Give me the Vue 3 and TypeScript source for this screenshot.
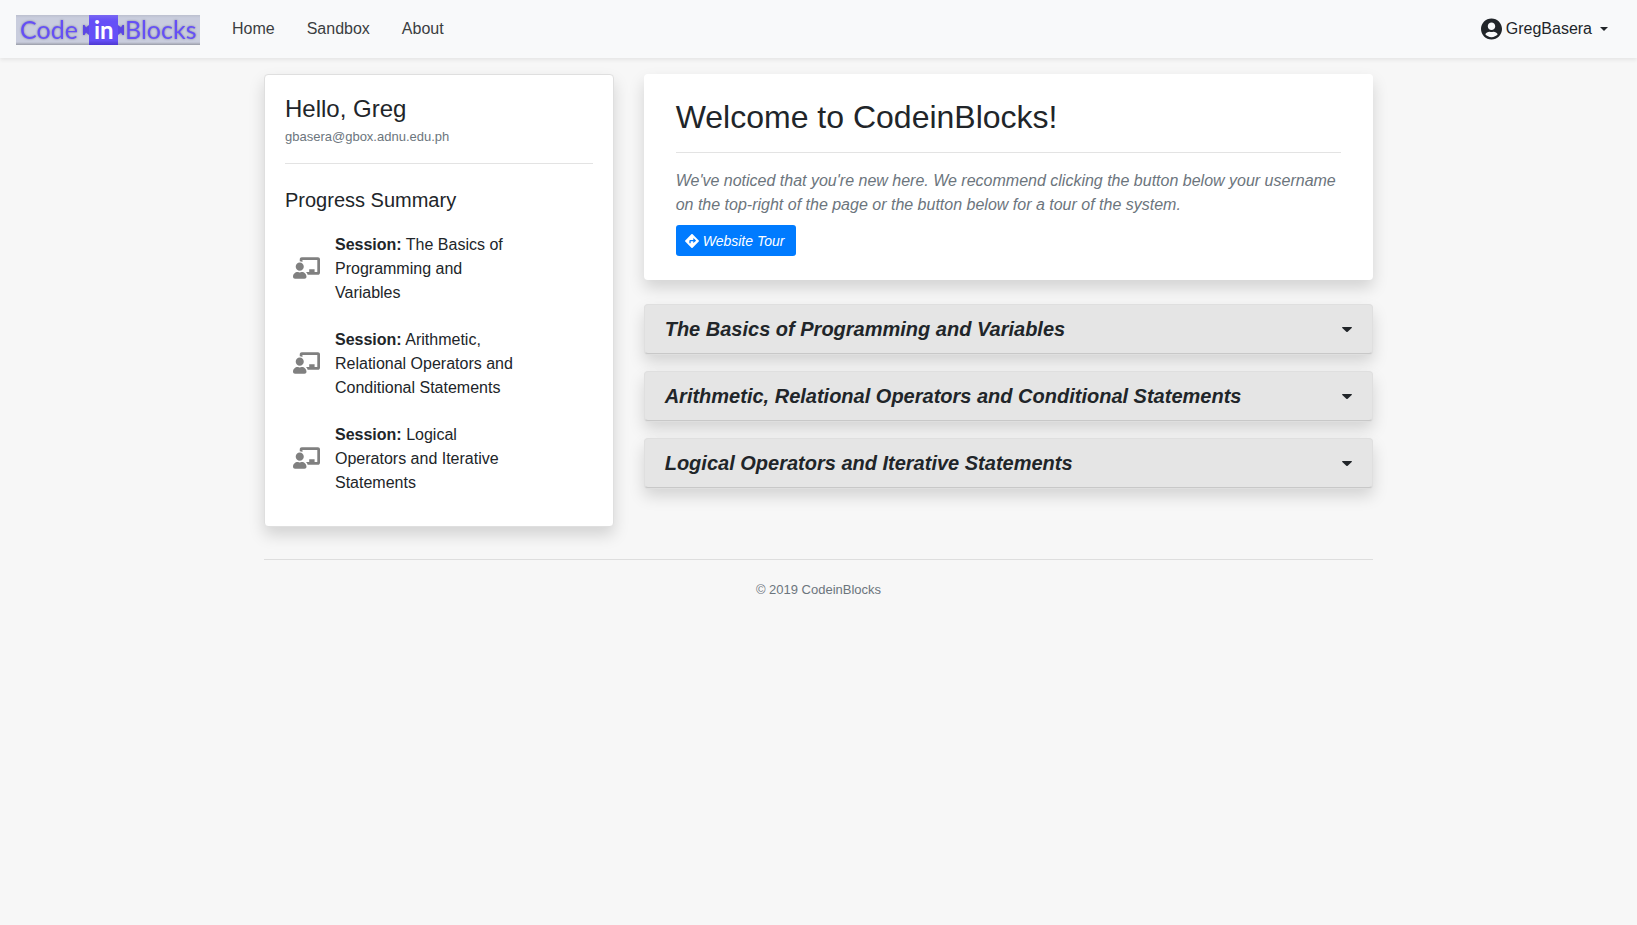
<script setup lang="ts">
import { ref } from 'vue'

interface Session {
  id: number
  title: string
}

const sessions: Session[] = [
  { id: 1, title: 'The Basics of Programming and Variables' },
  { id: 2, title: 'Arithmetic, Relational Operators and Conditional Statements' },
  { id: 3, title: 'Logical Operators and Iterative Statements' },
]

const links = ['Home', 'Sandbox', 'About']
const selected = ref<number | null>(null)

function select(id: number) {
  selected.value = selected.value === id ? null : id
}
</script>

<template>
  <header class="navbar">
    <a class="brand" href="#" aria-label="Code in Blocks">
      <svg class="logo" viewBox="0 0 184 30" aria-hidden="true">
        <defs>
          <linearGradient id="plate" x1="0" y1="0" x2="0" y2="1">
            <stop offset="0" stop-color="#bcc0cf" />
            <stop offset=".1" stop-color="#c9cddd" />
            <stop offset=".9" stop-color="#c9cddd" />
            <stop offset="1" stop-color="#9a9da8" />
          </linearGradient>
          <linearGradient id="block" x1="0" y1="0" x2="0" y2="1">
            <stop offset="0" stop-color="#7a68f2" />
            <stop offset=".2" stop-color="#654ff7" />
            <stop offset=".85" stop-color="#654ff7" />
            <stop offset="1" stop-color="#4d38d0" />
          </linearGradient>
          <filter id="glow" x="-10%" y="-20%" width="120%" height="140%">
            <feDropShadow dx="0" dy="0" stdDeviation="1.2" flood-color="#62657a" flood-opacity=".7" />
          </filter>
        </defs>
        <rect width="184" height="30" fill="url(#plate)" />
        <g filter="url(#glow)">
          <text class="logo-word" x="4" y="24">Code</text>
          <text class="logo-word" x="109" y="24">Blocks</text>
          <path d="M73 10L70 12.500L68.500 10H67V20H68.500L70 17.500L73 20zM102 10L105 12.500L106.500 10H108V20H106.500L105 17.500L102 20z" fill="#5b46e4" />
        </g>
        <rect x="73" width="29" height="30" fill="url(#block)" />
        <text class="logo-in" x="78" y="24">in</text>
      </svg>
    </a>
    <nav class="links" aria-label="Main">
      <a v-for="link in links" :key="link" href="#">{{ link }}</a>
    </nav>
    <button class="account" type="button" aria-haspopup="menu">
      <svg class="account-icon" viewBox="0 0 496 512" aria-hidden="true">
        <path fill="currentColor" d="M248 8C111 8 0 119 0 256s111 248 248 248 248-111 248-248S385 8 248 8zm0 96c48.600 0 88 39.400 88 88s-39.400 88-88 88-88-39.400-88-88 39.400-88 88-88zm0 344c-58.700 0-111.300-26.600-146.500-68.200 18.800-35.400 55.600-59.800 98.500-59.800 2.400 0 4.800.4 7.100 1.100 13 4.200 26.600 6.900 40.900 6.900 14.300 0 28-2.700 40.900-6.900 2.300-.7 4.700-1.100 7.100-1.100 42.900 0 79.700 24.400 98.500 59.800C359.300 421.400 306.700 448 248 448z" />
      </svg>
      <span>GregBasera</span>
      <span class="caret"></span>
    </button>
  </header>

  <div class="container">
    <main class="columns">
      <aside class="card profile">
        <h4>Hello, Greg</h4>
        <p class="email">gbasera@gbox.adnu.edu.ph</p>
        <hr />
        <h5>Progress Summary</h5>
        <ul>
          <li v-for="s in sessions" :key="s.id">
            <svg class="teacher" viewBox="0 0 640 512" aria-hidden="true">
              <path fill="currentColor" d="M208 352c-2.390 0-4.780.35-7.060 1.090C187.980 357.300 174.350 360 160 360c-14.350 0-27.980-2.700-40.950-6.910-2.280-.74-4.660-1.090-7.050-1.090C49.940 352-.33 402.480 0 464.620.14 490.880 21.730 512 48 512h224c26.270 0 47.860-21.120 48-47.380.33-62.140-49.940-112.620-112-112.620zm-48-32c53.020 0 96-42.980 96-96s-42.980-96-96-96-96 42.980-96 96 42.980 96 96 96zM592 0H208c-26.470 0-48 22.250-48 49.590V96c23.420 0 45.100 6.780 64 17.800V64h352v288h-64v-64H384v64h-76.240c19.100 16.690 33.120 38.730 39.690 64H592c26.470 0 48-22.250 48-49.590V49.590C640 22.250 618.470 0 592 0z" />
            </svg>
            <p><strong>Session:</strong> {{ s.title }}</p>
          </li>
        </ul>
      </aside>

      <div class="content">
        <section class="welcome">
          <h2>Welcome to CodeinBlocks!</h2>
          <hr />
          <p>We've noticed that you're new here. We recommend clicking the button below your username on the top-right of the page or the button below for a tour of the system.</p>
          <button class="tour" type="button">
            <svg class="directions" viewBox="0 0 512 512" aria-hidden="true">
              <path fill="currentColor" d="M502.610 233.320L278.680 9.380c-12.520-12.520-32.830-12.520-45.360 0L9.390 233.320c-12.520 12.530-12.520 32.830 0 45.360l223.930 223.940c12.520 12.530 32.830 12.530 45.360 0l223.930-223.940c12.520-12.530 12.520-32.830 0-45.360zm-100.980 12.560l-84.210 77.730c-5.120 4.730-13.430 1.100-13.430-5.880V264h-96v64c0 4.420-3.580 8-8 8h-32c-4.420 0-8-3.580-8-8v-80c0-17.670 14.330-32 32-32h112v-53.730c0-6.970 8.300-10.610 13.430-5.880l84.210 77.730c3.430 3.170 3.430 8.590 0 11.760z" />
            </svg>
            <span>Website Tour</span>
          </button>
        </section>

        <button
          v-for="s in sessions"
          :key="s.id"
          class="card session"
          type="button"
          :aria-pressed="selected === s.id"
          @click="select(s.id)"
        >
          <span>{{ s.title }}</span>
          <svg class="chevron" viewBox="0 0 10 5" aria-hidden="true">
            <path fill="currentColor" d="M.6 0h8.800q.9.3.3 1L5.700 4.700q-.7.600-1.400 0L.3 1Q-.3.300.6 0z" />
          </svg>
        </button>
      </div>
    </main>
    <footer>© 2019 CodeinBlocks</footer>
  </div>
</template>

<style>
body {
  margin: 0;
  background: #f7f7f7;
  color: #212529;
  font: 16px/24px "Liberation Sans", Arial, sans-serif;
}
</style>

<style scoped>
* {
  box-sizing: border-box;
}
h2, h4, h5, p, ul {
  margin: 0;
  padding: 0;
  font-weight: 400;
}
button {
  font: inherit;
  color: inherit;
  cursor: pointer;
}
hr {
  width: 100%;
  height: 1px;
  margin: 16px 0;
  border: 0;
  background: #e3e3e3;
}
.navbar {
  display: flex;
  align-items: center;
  height: 58px;
  padding: 0 16px;
  background: #f8f9fa;
  box-shadow: 0 2px 4px rgba(0, 0, 0, 0.075);
}
.brand {
  display: flex;
  margin-right: 32px;
  padding-top: 2px;
}
.logo {
  width: 184px;
  height: 30px;
}
.logo-word {
  font: 400 25px Lato, sans-serif;
  fill: #6650f5;
}
.logo-in {
  font: 700 24px Lato, sans-serif;
  fill: #fff;
}
.links {
  display: flex;
  flex: 1;
  gap: 32px;
}
.links a {
  color: #3b3e41;
  text-decoration: none;
}
.account {
  display: flex;
  align-items: center;
  gap: 4px;
  padding: 8px 13px;
  border: 0;
  background: none;
}
.account-icon {
  width: 21px;
  height: 22px;
}
.caret {
  margin-left: 4px;
  border: 4px solid transparent;
  border-top-color: currentColor;
  border-bottom: 0;
}
.container {
  max-width: 1139px;
  margin: 0 auto;
  padding: 16px 15px;
}
.columns {
  display: grid;
  grid-template-columns: 350fr 730fr;
  align-items: start;
  gap: 30px;
}
.card,
.welcome {
  border-radius: 4px;
  box-shadow: 0 8px 16px rgba(0, 0, 0, 0.15);
}
.card {
  border: 1px solid #dfdfdf;
}
.profile {
  padding: 19px 20px 31px;
  background: #fff;
}
h4 {
  font-size: 24px;
  line-height: 29px;
}
.email {
  margin-top: 2px;
  color: #6c757d;
  font-size: 13px;
}
.email + hr {
  margin-top: 14px;
}
h5 {
  margin-top: 24px;
  font-size: 20px;
  line-height: 24px;
}
ul {
  display: grid;
  gap: 23px;
  margin-top: 21px;
  list-style: none;
}
li {
  display: flex;
  align-items: center;
  gap: 15px;
  padding-left: 8px;
}
.teacher {
  flex: none;
  width: 27px;
  height: 22px;
  margin-bottom: 2px;
  color: #808080;
}
li p {
  max-width: 188px;
}
.content {
  display: flex;
  flex-direction: column;
  gap: 17px;
}
.welcome {
  margin-bottom: 7px;
  padding: 24px 32px;
  background: #fff;
}
h2 {
  font-size: 32px;
  line-height: 38px;
}
.welcome p {
  color: #6c757d;
  font-style: italic;
}
.tour {
  display: flex;
  align-items: center;
  gap: 4px;
  min-width: 120px;
  height: 31px;
  margin-top: 8px;
  padding: 0 9px;
  border: 0;
  border-radius: 3px;
  background: #007bff;
  color: #fff;
  font-size: 14px;
  font-style: italic;
}
.directions {
  width: 14px;
  height: 14px;
}
.session {
  display: flex;
  align-items: center;
  justify-content: space-between;
  padding: 12px 20px;
  border-bottom-color: #c8c8c8;
  background: #e5e5e5;
  box-shadow: 0 1px 0 #dfdfdf, 0 8px 16px rgba(0, 0, 0, 0.15);
  font-size: 20px;
  font-style: italic;
  font-weight: 700;
  text-align: left;
}
.chevron {
  width: 10px;
  height: 5px;
}
footer {
  margin-top: 32px;
  padding-top: 18px;
  border-top: 1px solid #dedede;
  color: #6c757d;
  font-size: 13px;
  text-align: center;
}
</style>
